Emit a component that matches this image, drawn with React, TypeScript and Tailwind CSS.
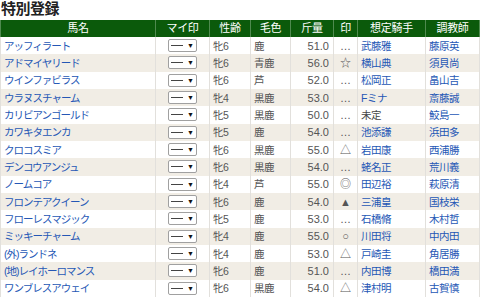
import React from 'react';

type Horse = {
  name: string;
  sexAge: string;
  color: string;
  weight: string;
  mark: string;
  jockey: string;
  jockeyLink?: boolean;
  trainer: string;
};

const horses: Horse[] = [
  { name: 'アッフィラート', sexAge: '牝6', color: '鹿', weight: '51.0', mark: '…', jockey: '武藤雅', trainer: '藤原英' },
  { name: 'アドマイヤリード', sexAge: '牝6', color: '青鹿', weight: '56.0', mark: '☆', jockey: '横山典', trainer: '須貝尚' },
  { name: 'ウインファビラス', sexAge: '牝6', color: '芦', weight: '52.0', mark: '…', jockey: '松岡正', trainer: '畠山吉' },
  { name: 'ウラヌスチャーム', sexAge: '牝4', color: '黒鹿', weight: '53.0', mark: '…', jockey: 'Fミナ', trainer: '斎藤誠' },
  { name: 'カリビアンゴールド', sexAge: '牝5', color: '黒鹿', weight: '50.0', mark: '…', jockey: '未定', jockeyLink: false, trainer: '鮫島一' },
  { name: 'カワキタエンカ', sexAge: '牝5', color: '鹿', weight: '54.0', mark: '…', jockey: '池添謙', trainer: '浜田多' },
  { name: 'クロコスミア', sexAge: '牝6', color: '黒鹿', weight: '55.0', mark: '△', jockey: '岩田康', trainer: '西浦勝' },
  { name: 'デンコウアンジュ', sexAge: '牝6', color: '黒鹿', weight: '54.0', mark: '…', jockey: '蛯名正', trainer: '荒川義' },
  { name: 'ノームコア', sexAge: '牝4', color: '芦', weight: '55.0', mark: '◎', jockey: '田辺裕', trainer: '萩原清' },
  { name: 'フロンテアクイーン', sexAge: '牝6', color: '鹿', weight: '54.0', mark: '▲', jockey: '三浦皇', trainer: '国枝栄' },
  { name: 'フローレスマジック', sexAge: '牝5', color: '鹿', weight: '53.0', mark: '…', jockey: '石橋脩', trainer: '木村哲' },
  { name: 'ミッキーチャーム', sexAge: '牝4', color: '鹿', weight: '55.0', mark: '○', jockey: '川田将', trainer: '中内田' },
  { name: '(外)ランドネ', sexAge: '牝4', color: '鹿', weight: '53.0', mark: '△', jockey: '戸崎圭', trainer: '角居勝' },
  { name: '(地)レイホーロマンス', sexAge: '牝6', color: '鹿', weight: '51.0', mark: '…', jockey: '内田博', trainer: '橋田満' },
  { name: 'ワンブレスアウェイ', sexAge: '牝6', color: '黒鹿', weight: '54.0', mark: '△', jockey: '津村明', trainer: '古賀慎' },
];

const headers = ['馬名', 'マイ印', '性齢', '毛色', '斤量', '印', '想定騎手', '調教師'];

const MySelect: React.FC = () => (
  <div className="mx-auto flex h-[13px] w-[29px] items-center justify-center gap-[4px] rounded-[2px] border border-[#a0a0a0] bg-white">
    <span className="h-px w-[12px] bg-[#444]" />
    <span className="text-[7px] leading-none text-[#111]">▼</span>
  </div>
);

const App: React.FC = () => {
  return (
    <div
      className="h-[302px] w-[480px] overflow-hidden bg-white text-[#555]"
      style={{ fontFamily: '"Liberation Sans", "Noto Sans CJK JP", sans-serif' }}
    >
      <h2 className="h-[20px] pl-px text-[15px] font-bold leading-[18px] tracking-[-0.5px] text-[#222]">特別登録</h2>
      <table className="w-[479px] table-fixed border-collapse text-[10.5px]">
        <colgroup>
          <col className="w-[155px]" />
          <col className="w-[54px]" />
          <col className="w-[41px]" />
          <col className="w-[40px]" />
          <col className="w-[43px]" />
          <col className="w-[24px]" />
          <col className="w-[68px]" />
          <col className="w-[54px]" />
        </colgroup>
        <thead>
          <tr className="h-[17px] bg-[#0b5a0b]">
            {headers.map((h) => (
              <th
                key={h}
                className="border-x border-[#4f8a4f] p-0 text-center text-[11px] font-normal leading-[17px] tracking-[-0.3px] text-white"
              >
                {h}
              </th>
            ))}
          </tr>
        </thead>
        <tbody>
          {horses.map((h, i) => (
            <tr key={h.name} className={`h-[17.33px] ${i % 2 === 1 ? 'bg-[#f1ede5]' : 'bg-white'}`}>
              <td className="border-x border-[#e2e0dc] py-0 pl-[3px] leading-[14px] tracking-[-1px] text-[#2557b5]">{h.name}</td>
              <td className="border-x border-[#e2e0dc] p-0">
                <MySelect />
              </td>
              <td className="border-x border-[#e2e0dc] py-0 pl-[3px] leading-[14px] tracking-[-0.5px]">{h.sexAge}</td>
              <td className="border-x border-[#e2e0dc] py-0 pl-[3px] leading-[14px] tracking-[-0.5px]">{h.color}</td>
              <td className="border-x border-[#e2e0dc] py-0 pr-[4px] text-right text-[11px] leading-[14px]">{h.weight}</td>
              <td className="border-x border-[#e2e0dc] p-0 text-center text-[11px] leading-[14px] text-[#555]">{h.mark}</td>
              <td
                className={`border-x border-[#e2e0dc] py-0 pl-[3px] leading-[14px] tracking-[-0.5px] ${
                  h.jockeyLink === false ? 'text-[#444]' : 'text-[#2557b5]'
                }`}
              >
                {h.jockey}
              </td>
              <td className="border-x border-[#e2e0dc] py-0 pl-[3px] leading-[14px] tracking-[-0.5px] text-[#2557b5]">{h.trainer}</td>
            </tr>
          ))}
        </tbody>
      </table>
    </div>
  );
};

export default App;
